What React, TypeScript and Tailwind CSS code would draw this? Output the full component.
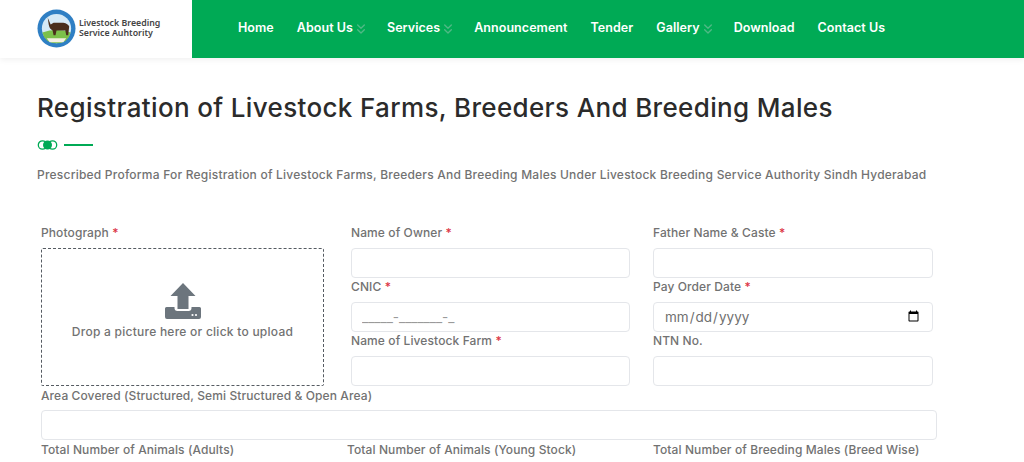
import { ChevronsDown } from "lucide-react";

type NavItem = {
  label: string;
  dropdown?: boolean;
};

const navItems: NavItem[] = [
  { label: "Home" },
  { label: "About Us", dropdown: true },
  { label: "Services", dropdown: true },
  { label: "Announcement" },
  { label: "Tender" },
  { label: "Gallery", dropdown: true },
  { label: "Download" },
  { label: "Contact Us" },
];

const Logo = () => (
  <svg width="39" height="39" viewBox="0 0 40 40" aria-hidden="true" className="shrink-0">
    <circle cx="20" cy="20" r="19.5" fill="#2f7fc4" />
    <circle cx="20" cy="20" r="15" fill="#d5e9f6" />
    <path d="M5.5 24 Q20 19 34.5 24 Q32 35 20 35 Q8 35 5.5 24Z" fill="#7cc04b" />
    <path d="M10 30 H30 L27 34 H13Z" fill="#f3efe2" />
    <path
      d="M11 9 L14 16 L17 14 L27 14 Q32 15 33 18 L32 27 L30 27 L29 22 L20 22 L19 27 L17 27 L16 22 Q13 21 12 16Z"
      fill="#4a2e1c"
    />
  </svg>
);

const Label = ({ text, required }: { text: string; required?: boolean }) => (
  <label className="block h-4 text-[12px] leading-[18px] font-medium tracking-[0.1px] text-[#727272] whitespace-nowrap">
    {text}
    {required && <span className="text-[#dc3545]"> *</span>}
  </label>
);

const inputClass =
  "block w-full h-[30px] rounded-[4px] border border-[#e4e6ea] bg-white px-[10px] text-[13.5px] text-[#6f6f6f] outline-none";

const Field = ({
  label,
  required,
  placeholder,
  type = "text",
}: {
  label: string;
  required?: boolean;
  placeholder?: string;
  type?: string;
}) => (
  <div>
    <Label text={label} required={required} />
    <input
      type={type}
      placeholder={placeholder}
      className={`${inputClass} mt-2 placeholder:text-[#9a9a9a]`}
    />
  </div>
);

export default function App() {
  return (
    <div className="h-[462px] w-[1024px] overflow-hidden bg-white font-['Inter',sans-serif]">
      <header className="flex h-[58px] shadow-[0_2px_6px_rgba(0,0,0,0.06)]">
        <div className="flex w-[192px] items-center gap-[3px] pl-[37px] pb-[2px]">
          <Logo />
          <div className="text-[8.8px] leading-[10px] font-semibold text-[#444] font-['Noto_Sans',sans-serif]">
            Livestock Breeding
            <br />
            Service Auhtority
          </div>
        </div>
        <nav className="flex flex-1 items-center gap-[23px] bg-[#00aa55] pl-[46px] pb-[2px]">
          {navItems.map((item) => (
            <a
              key={item.label}
              href="#"
              className="flex items-center text-[12.5px] font-semibold tracking-[0.05px] text-white whitespace-nowrap"
            >
              {item.label}
              {item.dropdown && (
                <ChevronsDown size={16} strokeWidth={2} className="mt-[2px] -mr-[5px] text-[#4fb985]" />
              )}
            </a>
          ))}
        </nav>
      </header>

      <main className="pl-[37px]">
        <h1 className="mt-[32px] h-[36px] text-[26px] leading-[36px] font-medium tracking-[0.35px] text-[#2b2b2b] whitespace-nowrap">
          Registration of Livestock Farms, Breeders And Breeding Males
        </h1>
        <div className="mt-[15px] flex h-[8px] items-center gap-[6px]">
          <svg width="21" height="10" viewBox="0 0 21 10" aria-hidden="true">
            <circle cx="5.5" cy="5" r="4.2" fill="none" stroke="#00aa55" strokeWidth="1.3" />
            <circle cx="15.5" cy="5" r="4.2" fill="none" stroke="#00aa55" strokeWidth="1.3" />
            <circle cx="10.5" cy="5" r="4.5" fill="#00aa55" />
          </svg>
          <div className="h-[2px] w-[29px] bg-[#00aa55]" />
        </div>
        <p className="mt-[17px] h-[18px] text-[12px] leading-[18px] font-medium tracking-[0.22px] text-[#727272] whitespace-nowrap">
          Prescribed Proforma For Registration of Livestock Farms, Breeders And Breeding Males Under Livestock Breeding
          Service Authority Sindh Hyderabad
        </p>

        <form className="mt-[40px] w-[900px] pl-[4px]">
          <div className="flex">
            <div className="w-[283px]">
              <Label text="Photograph" required />
              <div className="mt-2 flex h-[138px] flex-col items-center pt-[34px] rounded-[2px] border border-dashed border-[#555b62]">
                <svg width="36" height="36" viewBox="0 0 36 36" aria-hidden="true">
                  <path
                    fill="#6c757d"
                    d="M18 0 L30.5 13 L23.5 13 L23.5 26 L12.5 26 L12.5 13 L5.5 13 Z M1.5 24 L9.5 24 L9.5 25 Q9.5 28 12.5 28 L23.5 28 Q26.5 28 26.5 25 L26.5 24 L34.5 24 Q36 24 36 25.5 L36 34 Q36 36 34 36 L2 36 Q0 36 0 34 L0 25.5 Q0 24 1.5 24 Z"
                  />
                  <circle cx="27.5" cy="32" r="1.1" fill="#fff" />
                  <circle cx="31" cy="32" r="1.1" fill="#fff" />
                </svg>
                <span className="mt-[5px] text-[12px] leading-4 font-medium tracking-[0.25px] text-[#727272]">
                  Drop a picture here or click to upload
                </span>
              </div>
            </div>
            <div className="ml-[27px] w-[279px]">
              <Field label="Name of Owner" required />
              <Field label="CNIC" required placeholder="_____-_______-_" />
              <Field label="Name of Livestock Farm" required />
            </div>
            <div className="ml-[23px] w-[280px]">
              <Field label="Father Name & Caste" required />
              <Field label="Pay Order Date" required type="date" />
              <Field label="NTN No." />
            </div>
          </div>

          <div className="mt-px w-[896px]">
            <Label text="Area Covered (Structured, Semi Structured & Open Area)" />
            <input type="text" className={`${inputClass} mt-[7px]`} />
          </div>

          <div className="mt-px flex">
            <div className="w-[306px]">
              <Label text="Total Number of Animals (Adults)" />
            </div>
            <div className="w-[306px]">
              <Label text="Total Number of Animals (Young Stock)" />
            </div>
            <div>
              <Label text="Total Number of Breeding Males (Breed Wise)" />
            </div>
          </div>
        </form>
      </main>
    </div>
  );
}
